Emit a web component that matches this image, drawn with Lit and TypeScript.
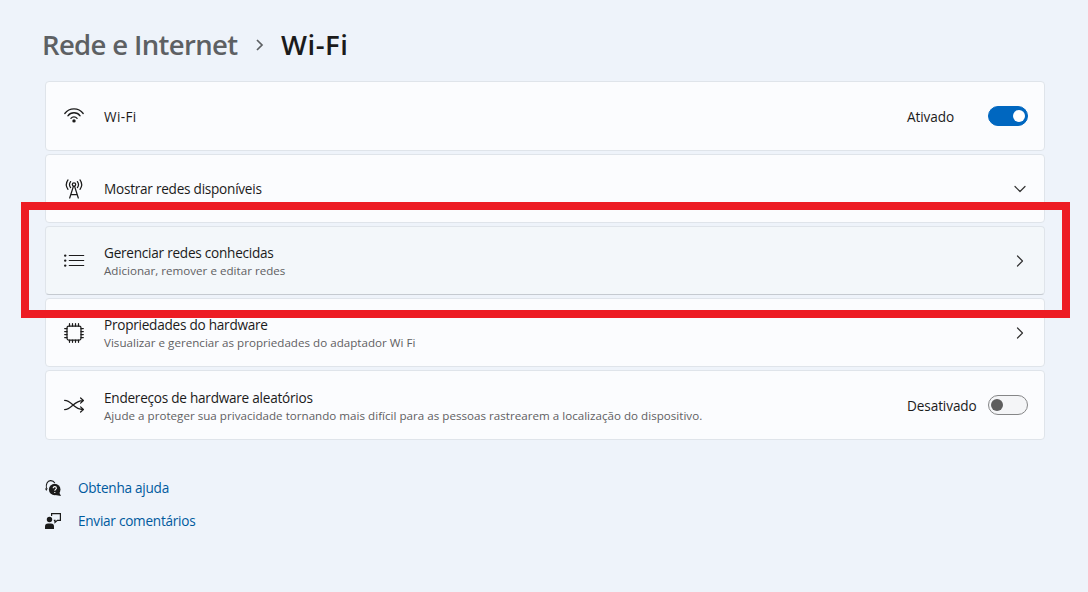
import { LitElement, html, css, svg, nothing } from "lit";
import { customElement, property } from "lit/decorators.js";

const icons: Record<string, unknown> = {
  wifi: svg`<g fill="none" stroke="#1b1b1b" stroke-width="1.3" stroke-linecap="round">
    <path d="M.8 7.500a11.500 11.500 0 0 1 18.400 0M3.900 9.800a7.600 7.600 0 0 1 12.200 0M6.900 12.300a4 4 0 0 1 6.200 0"/></g>
    <circle cx="10" cy="14.900" r="1.7" fill="#1b1b1b"/>`,
  tower: svg`<g fill="none" stroke="#1b1b1b" stroke-width="1.25" stroke-linecap="round">
    <circle cx="10" cy="5.6" r="1.7"/>
    <path d="M9.4 7.4 5.7 19M10.6 7.4 14.3 19M7 15.6h6M6.6 2.6a5 5 0 0 0 0 6M13.4 2.6a5 5 0 0 1 0 6M4 .9a8 8 0 0 0 0 9.4M16 .9a8 8 0 0 1 0 9.4"/></g>`,
  list: svg`<g fill="#1b1b1b"><circle cx="1.2" cy="4.6" r="1.2"/><circle cx="1.2" cy="9.6" r="1.2"/><circle cx="1.2" cy="14.6" r="1.2"/></g>
    <path d="M5.3 4.5h14.4M5.3 9.5h14.4M5.3 14.5h14.4" stroke="#1b1b1b" stroke-width="1.2" stroke-linecap="round"/>`,
  chip: svg`<g fill="none" stroke="#1b1b1b" stroke-width="1.25" stroke-linecap="round">
    <rect x="3" y="3" width="14" height="14" rx="1.8"/>
    <path d="M5.5 3V.7M8.5 3V.7M11.5 3V.7M14.5 3V.7M5.5 17v2.3M8.5 17v2.3M11.5 17v2.3M14.5 17v2.3M3 5.5H.7M3 8.5H.7M3 11.5H.7M3 14.5H.7M17 5.5h2.3M17 8.5h2.3M17 11.5h2.3M17 14.5h2.3"/></g>`,
  shuffle: svg`<g fill="none" stroke="#1b1b1b" stroke-width="1.25" stroke-linecap="round" stroke-linejoin="round">
    <path d="M.6 5.3C8 5.3 9.5 14.5 19 14.5M.6 14.5C8 14.5 9.5 5.5 19 5.5M16.6 3l2.800 2.5-2.800 2.600M16.6 11.9l2.800 2.600-2.800 2.5"/></g>`,
};

@customElement("toggle-switch")
export class ToggleSwitch extends LitElement {
  static styles = css`
    :host { display: block; }
    .track { box-sizing: border-box; width: 40px; height: 20px; border-radius: 10px; border: 1px solid #858687; background: #f4f5f7; display: flex; align-items: center; padding: 0 2px; }
    .knob { width: 12px; height: 12px; border-radius: 50%; background: #5d5d5d; }
    .on { background: #0067c0; border-color: #0067c0; justify-content: flex-end; }
    .on .knob { background: #fff; }
  `;
  @property({ type: Boolean }) on = false;
  render() {
    return html`<div class="track ${this.on ? "on" : ""}"><div class="knob"></div></div>`;
  }
}

@customElement("setting-card")
export class SettingCard extends LitElement {
  static styles = css`
    :host { display: block; }
    .card { box-sizing: border-box; height: 69px; border: 1px solid #dfe4ea; border-radius: 4px; background: #fbfcfe; display: flex; align-items: center; padding: 0 16px 0 18px; color: #1b1b1b; }
    .tall { height: 70px; }
    .hover { background: #f3f7fa; border-bottom-color: #c5cad0; }
    .icon { width: 20px; height: 20px; flex: none; overflow: visible; }
    .text { margin-left: 20px; flex: 1; white-space: nowrap; padding-top: 2px; }
    .title { font-size: 13.6px; line-height: 18px; letter-spacing: -0.25px; }
    .short { letter-spacing: 0.35px; }
    .sub { font-size: 11.6px; line-height: 17px; color: #5f6062; letter-spacing: 0.015px; }
    .state { font-size: 13.6px; line-height: 18px; width: 81px; padding-top: 2px; letter-spacing: -0.1px; }
    .single { padding-top: 1px; }
    .chevron { width: 16px; height: 16px; overflow: visible; }
  `;
  @property() icon = "";
  @property() heading = "";
  @property() sub = "";
  @property() status = "";
  @property() chevron = "";
  @property({ type: Boolean }) on = false;
  @property({ type: Boolean }) tall = false;
  @property({ type: Boolean }) hovered = false;
  render() {
    const points = this.chevron === "down" ? "3,5.5 8,10.5 13,5.5" : "5.5,3 10.5,8 5.5,13";
    return html`<div class="card ${this.tall ? "tall" : ""} ${this.hovered ? "hover" : ""}">
      <svg class="icon" viewBox="0 0 20 20">${icons[this.icon]}</svg>
      <div class="text ${this.sub ? "" : "single"}">
        <div class="title ${this.heading.length < 8 ? "short" : ""}">${this.heading}</div>
        ${this.sub ? html`<div class="sub">${this.sub}</div>` : nothing}
      </div>
      ${this.status
        ? html`<div class="state">${this.status}</div><toggle-switch ?on=${this.on}></toggle-switch>`
        : html`<svg class="chevron" viewBox="0 0 16 16"><polyline points=${points} fill="none" stroke="#333" stroke-width="1.2" stroke-linecap="round" stroke-linejoin="round"/></svg>`}
    </div>`;
  }
}

@customElement("app-root")
export class AppRoot extends LitElement {
  static styles = css`
    :host { display: block; position: relative; box-sizing: border-box; width: 1088px; height: 592px; overflow: hidden; background: #eef3fa; font-family: "Open Sans", "Noto Sans", sans-serif; padding: 24px 43px 0 45px; }
    .crumbs { display: flex; align-items: center; height: 40px; margin: 0 0 17px -3px; font-size: 27.5px; font-weight: 600; color: #5d6063; white-space: nowrap; }
    .parent { width: 195px; letter-spacing: -0.65px; }
    .sep { width: 10px; height: 14px; margin: 2px 16px 0 18px; }
    .current { color: #1b1b1b; letter-spacing: 0.5px; }
    .cards { display: grid; gap: 3px; width: 1000px; }
    .links { display: grid; gap: 13px; margin-top: 38px; }
    .link { display: flex; align-items: center; height: 20px; gap: 17px; font-size: 13.6px; letter-spacing: -0.26px; color: #005a9e; }
    .link span { padding-bottom: 2px; }
    .link svg { width: 16px; height: 16px; overflow: visible; }
    .frame { position: absolute; box-sizing: border-box; left: 21px; top: 202px; width: 1049px; height: 116px; border: 8px solid #ed1c24; }
  `;
  render() {
    return html`
      <div class="crumbs">
        <span class="parent">Rede e Internet</span>
        <svg class="sep" viewBox="0 0 10 14"><path d="M2 2l5 5-5 5" fill="none" stroke="#5d6063" stroke-width="1.7"/></svg>
        <span class="current">Wi-Fi</span>
      </div>
      <div class="cards">
        <setting-card icon="wifi" heading="Wi-Fi" status="Ativado" on tall></setting-card>
        <setting-card icon="tower" heading="Mostrar redes disponíveis" chevron="down"></setting-card>
        <setting-card icon="list" heading="Gerenciar redes conhecidas" sub="Adicionar, remover e editar redes" chevron="right" hovered></setting-card>
        <setting-card icon="chip" heading="Propriedades do hardware" sub="Visualizar e gerenciar as propriedades do adaptador Wi Fi" chevron="right"></setting-card>
        <setting-card icon="shuffle" heading="Endereços de hardware aleatórios" sub="Ajude a proteger sua privacidade tornando mais difícil para as pessoas rastrearem a localização do dispositivo." status="Desativado" tall></setting-card>
      </div>
      <div class="links">
        <div class="link">
          <svg viewBox="0 0 16 16"><path d="M1.500 8.500C.5 4 2.500.7 5.500.6 8 .5 9 1.500 9.800 3" fill="none" stroke="#1b1b1b" stroke-width="1.1"/><path d="M0 8.500l1.300 2.500 1.500-2.800z" fill="#1b1b1b"/><circle cx="9.7" cy="9.5" r="5.8" fill="#1b1b1b"/><path d="M13.500 11l2.500 5-6-1z" fill="#1b1b1b"/><path d="M8.2 8.2c0-2.200 3.2-2 3.2 0 0 1.200-1.600 1.200-1.600 2.500m0 1.200v1" fill="none" stroke="#fff" stroke-width="1.1"/></svg>
          <span>Obtenha ajuda</span>
        </div>
        <div class="link">
          <svg viewBox="0 0 16 16"><circle cx="4.5" cy="6.5" r="2.7" fill="#1b1b1b"/><path d="M0 16v-2.500Q0 10.500 3 10.500h3q3 0 3 3V16z" fill="#1b1b1b"/><path d="M6.600 3V.6h8.800v6.800h-3l-2.400 2v-2H8.800" fill="none" stroke="#1b1b1b" stroke-width="1.2"/></svg>
          <span>Enviar comentários</span>
        </div>
      </div>
      <div class="frame"></div>`;
  }
}
